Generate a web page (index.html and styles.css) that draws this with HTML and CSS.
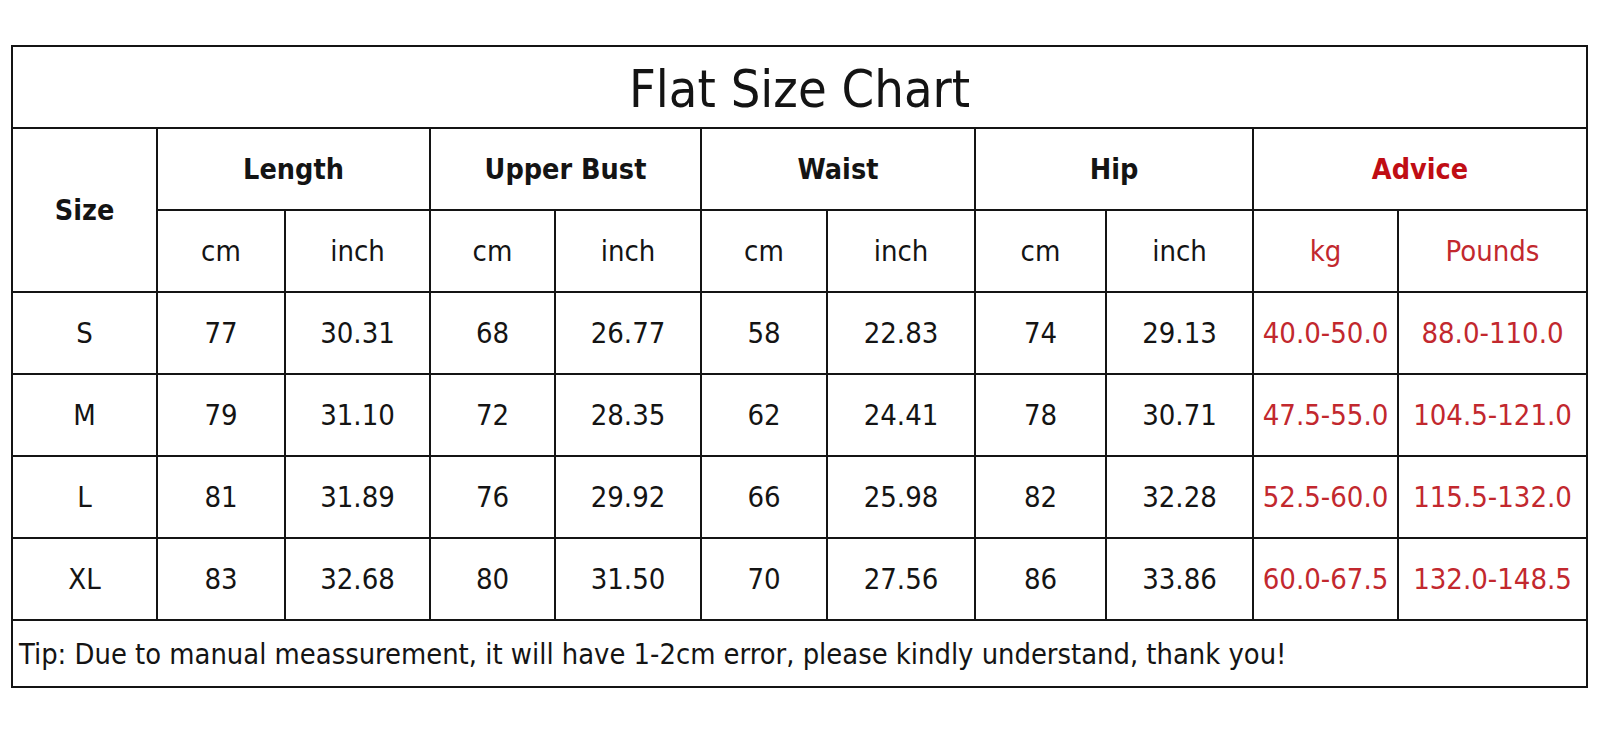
FILE: index.html
```html
<!DOCTYPE html>
<html>
<head>
<meta charset="utf-8">
<link rel="stylesheet" href="styles.css">
</head>
<body>
<table class="chart">
  <colgroup>
    <col class="c1"><col class="c2"><col class="c3"><col class="c4"><col class="c5"><col class="c6"><col class="c7"><col class="c8"><col class="c9"><col class="c10"><col class="c11">
  </colgroup>
  <tr class="r-title"><td colspan="11" class="title">Flat Size Chart</td></tr>
  <tr class="r-h1">
    <td rowspan="2" class="hd">Size</td>
    <td colspan="2" class="hd">Length</td>
    <td colspan="2" class="hd">Upper Bust</td>
    <td colspan="2" class="hd">Waist</td>
    <td colspan="2" class="hd">Hip</td>
    <td colspan="2" class="hd red-b">Advice</td>
  </tr>
  <tr class="r-h2">
    <td>cm</td><td>inch</td><td>cm</td><td>inch</td><td>cm</td><td>inch</td><td>cm</td><td>inch</td><td class="red">kg</td><td class="red">Pounds</td>
  </tr>
  <tr class="r-d"><td>S</td><td>77</td><td>30.31</td><td>68</td><td>26.77</td><td>58</td><td>22.83</td><td>74</td><td>29.13</td><td class="red">40.0-50.0</td><td class="red">88.0-110.0</td></tr>
  <tr class="r-d"><td>M</td><td>79</td><td>31.10</td><td>72</td><td>28.35</td><td>62</td><td>24.41</td><td>78</td><td>30.71</td><td class="red">47.5-55.0</td><td class="red">104.5-121.0</td></tr>
  <tr class="r-d"><td>L</td><td>81</td><td>31.89</td><td>76</td><td>29.92</td><td>66</td><td>25.98</td><td>82</td><td>32.28</td><td class="red">52.5-60.0</td><td class="red">115.5-132.0</td></tr>
  <tr class="r-d"><td>XL</td><td>83</td><td>32.68</td><td>80</td><td>31.50</td><td>70</td><td>27.56</td><td>86</td><td>33.86</td><td class="red">60.0-67.5</td><td class="red">132.0-148.5</td></tr>
  <tr class="r-tip"><td colspan="11" class="tip">Tip: Due to manual meassurement, it will have 1-2cm error, please kindly understand, thank you!</td></tr>
</table>
</body>
</html>
```
FILE: styles.css
```css
html, body {
  margin: 0;
  padding: 0;
  background: #ffffff;
}
body {
  padding: 45px 0 0 11px;
  font-family: "DejaVu Sans Condensed", "DejaVu Sans", sans-serif;
  font-stretch: condensed;
  color: #141414;
}
.chart {
  border-collapse: separate;
  border-spacing: 0;
  table-layout: fixed;
  width: 1577px;
  border-left: 2px solid #141414;
  border-top: 2px solid #141414;
}
.chart td {
  box-sizing: border-box;
  border-right: 2px solid #141414;
  border-bottom: 2px solid #141414;
  text-align: center;
  vertical-align: middle;
  padding: 0;
  font-size: 29px;
  white-space: nowrap;
}
.c1 { width: 145px; }
.c2 { width: 128px; }
.c3 { width: 145px; }
.c4 { width: 125px; }
.c5 { width: 146px; }
.c6 { width: 126px; }
.c7 { width: 148px; }
.c8 { width: 131px; }
.c9 { width: 147px; }
.c10 { width: 145px; }
.c11 { width: 189px; }
.r-title td { height: 82px; }
.r-h1 td { height: 82px; }
.r-h2 td, .r-d td { height: 82px; }
.r-tip td { height: 67px; }
.chart td.title {
  font-size: 52px;
  padding-top: 4px;
}
.chart td.hd {
  font-weight: bold;
  font-size: 28.5px;
}
.chart td.red { color: #c2282e; }
.chart td.red-b { color: #c00d14; }
.chart td.tip {
  text-align: left;
  padding-left: 6px;
  font-size: 28.8px;
}
```
